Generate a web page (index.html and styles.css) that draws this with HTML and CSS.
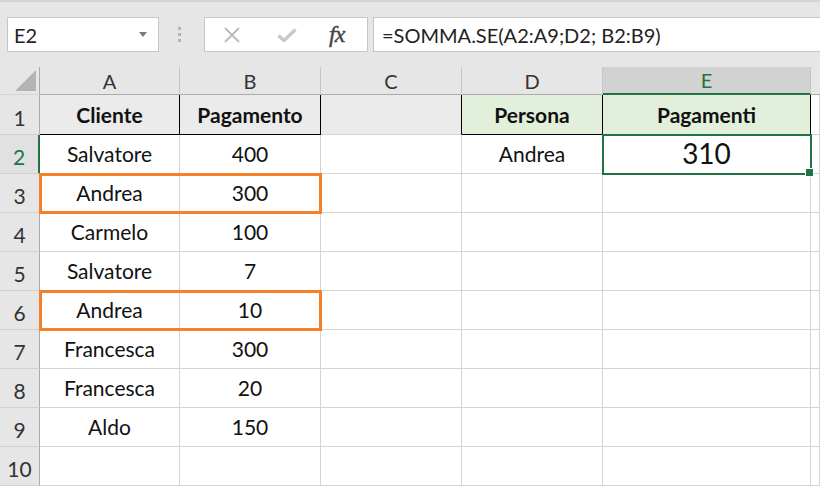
FILE: index.html
```html
<!DOCTYPE html>
<html lang="it">
<head>
    <meta charset="UTF-8">
    <meta name="viewport" content="width=device-width, initial-scale=1.0">
    <title>SOMMA.SE</title>
    <link rel="stylesheet" href="styles.css">
</head>
<body>
    <div class="topbar">
        <div class="namebox">
            <span>E2</span>
            <svg class="dropdown" width="8" height="5" viewBox="0 0 8 5"><path d="M0 0H8L4 5Z" fill="#7a7a7a"/></svg>
        </div>
        <div class="grip"><i></i><i></i><i></i></div>
        <div class="fxbox">
            <svg class="icon-cancel" width="18" height="16" viewBox="0 0 18 16">
                <path d="M2 1L16 15M16 1L2 15" stroke="#b9b9b9" stroke-width="1.8" fill="none"/>
            </svg>
            <svg class="icon-enter" width="20" height="14" viewBox="0 0 20 14">
                <path d="M1.5 7.5L7 12.5L18.5 1.5" stroke="#c8c8c8" stroke-width="3.4" fill="none"/>
            </svg>
            <span class="fx">fx</span>
        </div>
        <div class="formula">=SOMMA.SE(A2:A9;D2; B2:B9)</div>
    </div>

    <div class="sheet">
        <div class="row colheads">
            <div class="c corner"><span class="tri"></span></div>
            <div class="c ch">A</div>
            <div class="c ch">B</div>
            <div class="c ch">C</div>
            <div class="c ch">D</div>
            <div class="c ch sel">E</div>
            <div class="c ch last"></div>
        </div>
        <div class="row first">
            <div class="c rh">1</div>
            <div class="c gray tbl bold">Cliente</div>
            <div class="c gray tbl bold">Pagamento</div>
            <div class="c gray tbl-left"></div>
            <div class="c green tbl bold">Persona</div>
            <div class="c green tbl bold">Pagamenti</div>
            <div class="c"></div>
        </div>
        <div class="row">
            <div class="c rh sel">2</div>
            <div class="c">Salvatore</div>
            <div class="c">400</div>
            <div class="c"></div>
            <div class="c">Andrea</div>
            <div class="c active">310</div>
            <div class="c"></div>
        </div>
        <div class="row">
            <div class="c rh">3</div>
            <div class="mark">
                <div class="c">Andrea</div>
                <div class="c">300</div>
            </div>
            <div class="c"></div>
            <div class="c"></div>
            <div class="c"></div>
            <div class="c"></div>
        </div>
        <div class="row">
            <div class="c rh">4</div>
            <div class="c">Carmelo</div>
            <div class="c">100</div>
            <div class="c"></div>
            <div class="c"></div>
            <div class="c"></div>
            <div class="c"></div>
        </div>
        <div class="row">
            <div class="c rh">5</div>
            <div class="c">Salvatore</div>
            <div class="c">7</div>
            <div class="c"></div>
            <div class="c"></div>
            <div class="c"></div>
            <div class="c"></div>
        </div>
        <div class="row">
            <div class="c rh">6</div>
            <div class="mark">
                <div class="c">Andrea</div>
                <div class="c">10</div>
            </div>
            <div class="c"></div>
            <div class="c"></div>
            <div class="c"></div>
            <div class="c"></div>
        </div>
        <div class="row">
            <div class="c rh">7</div>
            <div class="c">Francesca</div>
            <div class="c">300</div>
            <div class="c"></div>
            <div class="c"></div>
            <div class="c"></div>
            <div class="c"></div>
        </div>
        <div class="row">
            <div class="c rh">8</div>
            <div class="c">Francesca</div>
            <div class="c">20</div>
            <div class="c"></div>
            <div class="c"></div>
            <div class="c"></div>
            <div class="c"></div>
        </div>
        <div class="row">
            <div class="c rh">9</div>
            <div class="c">Aldo</div>
            <div class="c">150</div>
            <div class="c"></div>
            <div class="c"></div>
            <div class="c"></div>
            <div class="c"></div>
        </div>
        <div class="row">
            <div class="c rh">10</div>
            <div class="c"></div>
            <div class="c"></div>
            <div class="c"></div>
            <div class="c"></div>
            <div class="c"></div>
            <div class="c"></div>
        </div>
    </div>
</body>
</html>
```

FILE: styles.css
```css
* {
    margin: 0;
    padding: 0;
    box-sizing: border-box;
}

body {
    font-family: 'Lato', 'Liberation Sans', sans-serif;
    background-color: #fff;
    color: #111;
    width: 820px;
    height: 487px;
    overflow: hidden;
}

/* formula bar */

.topbar {
    height: 67px;
    background-color: #e6e6e6;
    border-top: 2px solid #d4d4d4;
    padding-top: 15px;
    display: flex;
    align-items: flex-start;
}

.namebox {
    margin-left: 7px;
    width: 152px;
    height: 35px;
    background-color: #fff;
    border: 1px solid #c6c6c6;
    display: flex;
    align-items: center;
    justify-content: space-between;
    padding: 0 11px 0 6px;
    font-size: 20px;
    color: #222;
}

.grip {
    margin-left: 19px;
    margin-top: 10px;
    display: flex;
    flex-direction: column;
    gap: 3px;
}

.grip i {
    display: block;
    width: 3px;
    height: 3px;
    background-color: #b4b4b4;
}

.fxbox {
    margin-left: 23px;
    width: 164px;
    height: 35px;
    background-color: #fff;
    border: 1px solid #c6c6c6;
    display: flex;
    align-items: center;
    padding-left: 18px;
}

.icon-enter {
    margin-left: 36px;
}

.fx {
    margin-left: 32px;
    font-family: 'Liberation Serif', serif;
    font-style: italic;
    font-size: 24px;
    color: #444;
    letter-spacing: -1px;
    -webkit-text-stroke: 0.4px #444;
}

.formula {
    margin-left: 5px;
    flex: 1;
    height: 35px;
    background-color: #fff;
    border: 1px solid #c6c6c6;
    border-right: none;
    display: flex;
    align-items: center;
    padding-left: 8px;
    font-size: 20px;
    color: #222;
}

/* grid */

.row {
    display: grid;
    grid-template-columns: 40px 140px 141px 141px 141px 208px 1fr;
    height: 39px;
}

.row.first {
    height: 40px;
}

.c {
    border-right: 1px solid #d4d4d4;
    border-bottom: 1px solid #d4d4d4;
    display: flex;
    align-items: flex-end;
    justify-content: center;
    padding-bottom: 7px;
    font-size: 21px;
    white-space: nowrap;
}

.colheads {
    height: 28px;
    background-color: #e6e6e6;
}

.ch {
    align-items: center;
    padding-bottom: 0;
    font-size: 20px;
    border-right-color: #c6c6c6;
    border-bottom-color: #ababab;
    color: #333;
}

.ch.sel {
    background-color: #d2d2d2;
    color: #217346;
    border-bottom: 2px solid #217346;
}

.ch.last {
    border-right: none;
}

.corner {
    position: relative;
    border-right-color: #ababab;
}

.tri {
    position: absolute;
    right: 3px;
    bottom: 3px;
    width: 21px;
    height: 21px;
    background-color: #b4b4b4;
    clip-path: polygon(100% 0, 100% 100%, 0 100%);
}

.rh {
    background-color: #e6e6e6;
    border-right-color: #ababab;
    border-bottom-color: #d0d0d0;
    padding-bottom: 4px;
    color: #333;
}

.rh.sel {
    background-color: #e1e1e1;
    color: #217346;
    border-right: 2px solid #217346;
}

.gray {
    background-color: #ebebeb;
}

.green {
    background-color: #e2efda;
}

.bold {
    font-weight: bold;
}

.tbl {
    border-right-color: #000;
    border-bottom-color: #000;
}

.tbl-left {
    border-right-color: #000;
}

.active {
    position: relative;
    z-index: 2;
    font-size: 28px;
    padding-bottom: 3px;
    outline: 2px solid #217346;
    outline-offset: -1px;
}

.active::after {
    content: '';
    position: absolute;
    right: -4px;
    bottom: -4px;
    width: 7px;
    height: 7px;
    background-color: #217346;
    border: 1px solid #fff;
}

.mark {
    grid-column: span 2;
    display: grid;
    grid-template-columns: 140px 141px;
    position: relative;
    z-index: 1;
    outline: 3px solid #f4802a;
    outline-offset: -2px;
}
```
